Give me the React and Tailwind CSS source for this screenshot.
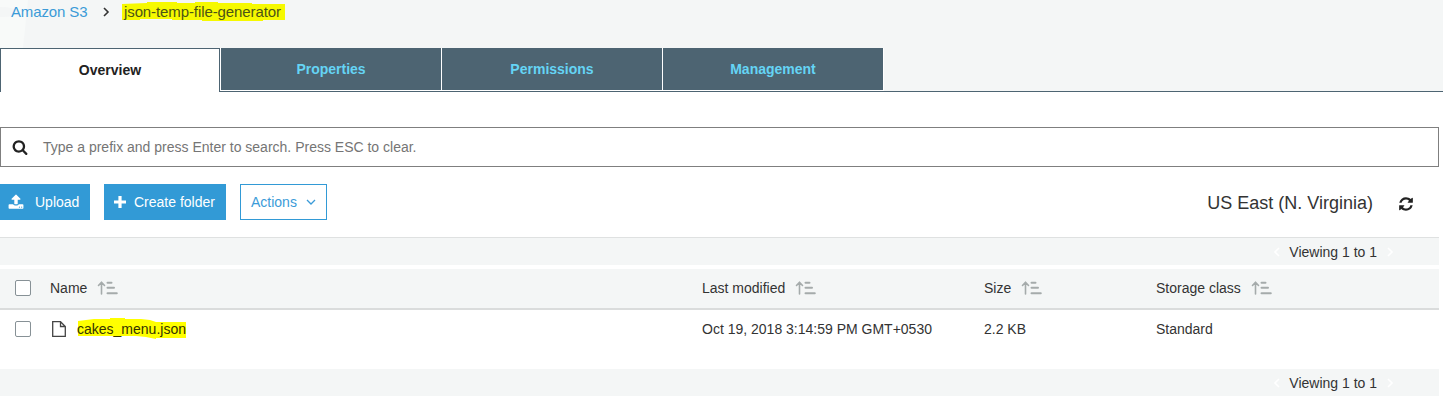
const Fa = ({ d, className }) => (
  <svg viewBox="0 0 1792 1792" fill="currentColor" className={className}>
    <path d={d} />
  </svg>
);

const SEARCH =
  "M1216 832q0-185-131.5-316.5t-316.5-131.5-316.5 131.5-131.5 316.5 131.5 316.5 316.5 131.5 316.5-131.5 131.5-316.5zm512 832q0 52-38 90t-90 38q-54 0-90-38l-343-342q-179 124-399 124-143 0-273.5-55.5t-225-150-150-225-55.5-273.5 55.5-273.5 150-225 225-150 273.5-55.5 273.5 55.5 225 150 150 225 55.5 273.5q0 220-124 399l343 343q37 37 37 90z";
const UPLOAD =
  "M1344 1472q0-26-19-45t-45-19-45 19-19 45 19 45 45 19 45-19 19-45zm256 0q0-26-19-45t-45-19-45 19-19 45 19 45 45 19 45-19 19-45zm128-224v320q0 40-28 68t-68 28h-1472q-40 0-68-28t-28-68v-320q0-40 28-68t68-28h427q21 56 70.5 92t110.5 36h256q61 0 110.5-36t70.5-92h427q40 0 68 28t28 68zm-325-648q-17 40-59 40h-256v448q0 26-19 45t-45 19h-256q-26 0-45-19t-19-45v-448h-256q-42 0-59-40-17-39 14-69l448-448q18-19 45-19t45 19l448 448q31 30 14 69z";
const REFRESH =
  "M1639 1056q0 5-1 7-64 268-268 434.5t-478 166.5q-146 0-282.5-55t-243.5-157l-129 129q-19 19-45 19t-45-19-19-45v-448q0-26 19-45t45-19h448q26 0 45 19t19 45-19 45l-137 137q71 66 161 102t187 36q134 0 250-65t186-179q11-17 53-117 8-23 30-23h192q13 0 22.5 9.5t9.5 22.5zm25-800v448q0 26-19 45t-45 19h-448q-26 0-45-19t-19-45 19-45l138-138q-148-137-349-137-134 0-250 65t-186 179q-11 17-53 117-8 23-30 23h-199q-13 0-22.5-9.5t-9.5-22.5v-7q65-268 270-434.5t480-166.5q146 0 284 55.5t245 156.5l130-129q19-19 45-19t45 19 19 45z";

const Chevron = ({ className, d }) => (
  <svg viewBox="0 0 10 10" fill="none" stroke="currentColor" className={className}>
    <path d={d} />
  </svg>
);

const SortIcon = () => (
  <svg viewBox="0 0 21 14" fill="none" stroke="#a5abab" strokeLinecap="round" strokeLinejoin="round" className="ml-[10px] h-[14px] w-[21px]">
    <path d="M4.500 13V1.300M1.500 4.500L4.500 1.200l3 3.300" strokeWidth="1.600" />
    <path d="M10.500 1.700h4M10.500 6.700h6.500M10.500 12.200h9.300" strokeWidth="2" />
  </svg>
);

const Tab = ({ children }) => (
  <div className="flex h-[42px] w-[220px] items-center justify-center bg-[#4d6472] text-[#65d4f5]">{children}</div>
);

const Checkbox = () => <div className="h-4 w-4 rounded-[2px] border border-[#879196] bg-white" />;

const Pager = () => (
  <div className="flex h-full items-center justify-end pr-[45px]">
    <Chevron className="mr-[7px] h-[10px] w-[10px] stroke-[1.600] text-white" d="M7 1L3 5L7 9" />
    <span>Viewing 1 to 1</span>
    <Chevron className="ml-[7px] h-[10px] w-[10px] stroke-[1.600] text-white" d="M4 1L8 5L4 9" />
  </div>
);

const GRID = "grid grid-cols-[50px_652px_282px_172px_1fr] items-center";

export default function App() {
  return (
    <div className="h-[404px] w-[1443px] overflow-hidden bg-white font-['Liberation_Sans',Arial,sans-serif] text-[14px] leading-[18px] text-[#333]">
      <header className="relative flex h-[92px] flex-col justify-between border-b border-[#4d6472] bg-[#f4f6f6]">
        <svg viewBox="0 0 28 48" className="absolute left-0 top-0 h-12 w-7" fill="#f8faf9">
          <path d="M0 0H28L23 48H0Z" />
          <path d="M0 7Q15 7 19 12Q17 17 0 17Z" fill="#f4f6f6" />
        </svg>
        <div className="relative flex h-6 items-center pl-[11px] text-[15px]">
          <span className="w-[76px] whitespace-nowrap tracking-[-0.13px] text-[#3b9bd8]">Amazon S3</span>
          <Chevron className="ml-[14px] h-[10px] w-[10px] stroke-[1.600] text-[#333]" d="M3 1L7 5L3 9" />
          <div className="relative ml-[13px]">
            <svg viewBox="0 0 163 20" className="absolute -left-[2px] -top-px h-5 w-[163px]" fill="#f6f900">
              <path d="M0 2L25 1V0H55V1H73V0H96V1H130V2H163V18H141V19H80V18H50V17H18V18H0Z" />
            </svg>
            <span className="relative tracking-[-0.1px] text-[#4c5416]">json-temp-file-generator</span>
          </div>
        </div>
        <nav className="relative flex h-[43px] gap-px bg-[linear-gradient(to_right,white_884px,transparent_884px)] text-[14px] font-bold">
          <div className="-mb-px flex h-[44px] w-[220px] items-center justify-center border border-b-0 border-[#4d6472] bg-white pb-[2px] text-[#222]">
            Overview
          </div>
          <Tab>Properties</Tab>
          <Tab>Permissions</Tab>
          <Tab>Management</Tab>
        </nav>
      </header>

      <main className="w-[1439px] pt-[35px]">
        <div className="flex h-10 items-center border border-[#7f7f7f] pl-[11px]">
          <Fa d={SEARCH} className="h-4 w-4 text-[#222]" />
          <span className="ml-[15px] text-[#757575]">Type a prefix and press Enter to search. Press ESC to clear.</span>
        </div>

        <div className="flex h-[70px] items-start pt-[17px]">
          <button className="flex h-9 w-[90px] items-center bg-[#329ad6] pl-2 text-white">
            <Fa d={UPLOAD} className="h-4 w-4" />
            <span className="ml-[11px]">Upload</span>
          </button>
          <button className="ml-[14px] flex h-9 w-[122px] items-center bg-[#329ad6] pl-[10px] text-white">
            <svg viewBox="0 0 12 12" className="h-3 w-3" stroke="currentColor" strokeWidth="3.200">
              <path d="M6 0V12M0 6H12" />
            </svg>
            <span className="ml-2">Create folder</span>
          </button>
          <button className="ml-[14px] flex h-9 w-[87px] items-center border border-[#329ad6] pl-[10px] text-[#3b9bd8]">
            <span>Actions</span>
            <Chevron className="ml-[9px] h-[10px] w-[10px] stroke-[1.300]" d="M1 3L5 7L9 3" />
          </button>
          <div className="ml-auto flex h-[38px] items-center pr-[25px]">
            <span className="text-[18px]">US East (N. Virginia)</span>
            <Fa d={REFRESH} className="ml-[25px] mt-[2px] h-4 w-4 text-[#222]" />
          </div>
        </div>

        <div className="h-7 border-t border-[#dfe1e1] bg-[#f4f6f6]">
          <Pager />
        </div>
        <div className={`mt-1 h-[41px] border-b-2 border-[#dadcdc] bg-[#f4f6f6] pb-px ${GRID}`}>
          <div className="pl-[15px]"><Checkbox /></div>
          <div className="flex items-center">Name<SortIcon /></div>
          <div className="flex items-center">Last modified<SortIcon /></div>
          <div className="flex items-center">Size<SortIcon /></div>
          <div className="flex items-center">Storage class<SortIcon /></div>
        </div>
        <div className="h-[59px]">
          <div className={`h-[38px] ${GRID}`}>
            <div className="pl-[15px]"><Checkbox /></div>
            <div className="flex items-center">
              <svg viewBox="0 0 16 16" className="ml-px h-4 w-4" fill="none" stroke="#444" strokeWidth="1.300">
                <path d="M1.700 .7H9.500L14.300 5.500V15.300H1.700ZM9.500 .7V5.500H14.300" />
              </svg>
              <div className="relative ml-[10px]">
                <svg viewBox="0 0 108 21" className="absolute left-[1px] -top-[2px] h-[21px] w-[108px]" fill="#ffff00">
                  <path d="M0 3L8 2L16 1H32V0H47V1H63L72 2L78 4H108V20H78V21L68 19L58 18H0Z" />
                </svg>
                <span className="relative text-[#333300]">cakes_menu.json</span>
              </div>
            </div>
            <div>Oct 19, 2018 3:14:59 PM GMT+0530</div>
            <div>2.2 KB</div>
            <div>Standard</div>
          </div>
        </div>
        <div className="h-[27px] bg-[#f4f6f6]">
          <Pager />
        </div>
      </main>
    </div>
  );
}
